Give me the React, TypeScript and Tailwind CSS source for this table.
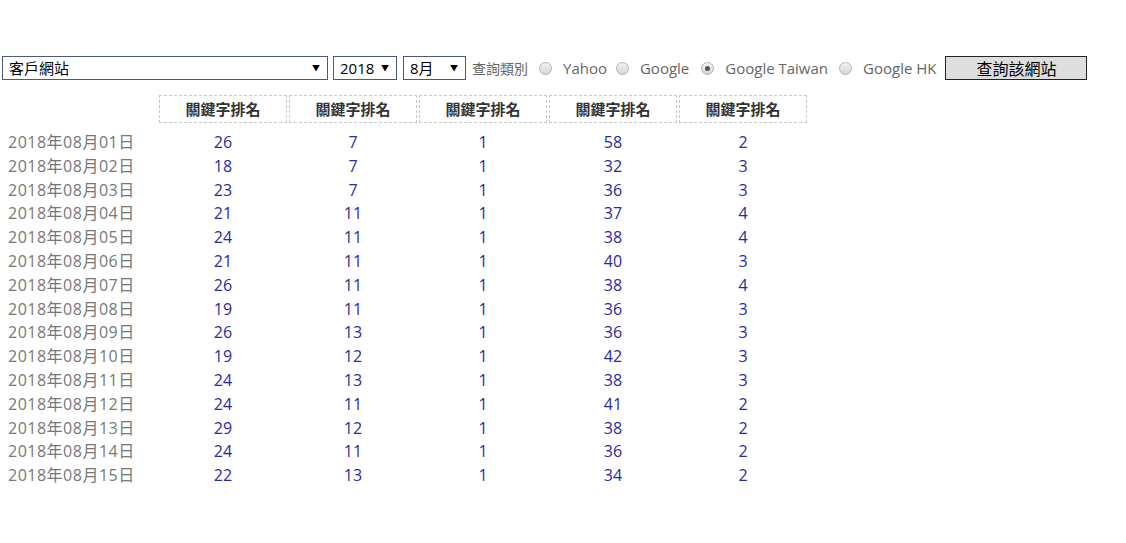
import React from 'react';

const rows: [string, number[]][] = [
  ['2018年08月01日', [26, 7, 1, 58, 2]],
  ['2018年08月02日', [18, 7, 1, 32, 3]],
  ['2018年08月03日', [23, 7, 1, 36, 3]],
  ['2018年08月04日', [21, 11, 1, 37, 4]],
  ['2018年08月05日', [24, 11, 1, 38, 4]],
  ['2018年08月06日', [21, 11, 1, 40, 3]],
  ['2018年08月07日', [26, 11, 1, 38, 4]],
  ['2018年08月08日', [19, 11, 1, 36, 3]],
  ['2018年08月09日', [26, 13, 1, 36, 3]],
  ['2018年08月10日', [19, 12, 1, 42, 3]],
  ['2018年08月11日', [24, 13, 1, 38, 3]],
  ['2018年08月12日', [24, 11, 1, 41, 2]],
  ['2018年08月13日', [29, 12, 1, 38, 2]],
  ['2018年08月14日', [24, 11, 1, 36, 2]],
  ['2018年08月15日', [22, 13, 1, 34, 2]]
];

// ml tweaks keep the radios where the screenshot has them
const engines = [
  { label: 'Yahoo', checked: false, ml: 'ml-[11px]' },
  { label: 'Google', checked: false, ml: 'ml-[9px]' },
  { label: 'Google Taiwan', checked: true, ml: 'ml-[12px]' },
  { label: 'Google HK', checked: false, ml: 'ml-[11px]' }
];

const FakeSelect = ({ text, width }: { text: string; width: string }) => (
  <div
    className={`${width} h-[24px] flex items-center justify-between border border-[#4a5a78] bg-white pl-[6px] pr-[7px] text-[15px] text-black`}>
    <span>{text}</span>
    <span className="text-[8px]">▼</span>
  </div>
);

const Radio = ({ checked }: { checked: boolean }) => (
  <span className="w-[13px] h-[13px] rounded-full border border-[#b5b5b5] bg-gradient-to-b from-[#f2f2f2] to-[#d6d6d6] flex items-center justify-center">
    {checked && <span className="w-[5px] h-[5px] rounded-full bg-[#555]" />}
  </span>
);

export default function App() {
  return (
    <div
      className="w-[1126px] h-[543px] bg-white overflow-hidden"
      style={{ fontFamily: '"Open Sans", "Noto Sans CJK TC", sans-serif' }}>
      <div className="flex items-center pt-[56px] pl-[2px] h-[80px]">
        <FakeSelect text="客戶網站" width="w-[326px]" />
        <div className="ml-[5px]">
          <FakeSelect text="2018" width="w-[64px]" />
        </div>
        <div className="ml-[6px]">
          <FakeSelect text="8月" width="w-[63px]" />
        </div>
        <span className="ml-[6px] text-[14px] text-[#666]">查詢類別</span>
        {engines.map((e) => (
          <div key={e.label} className={`flex items-center gap-[11px] ${e.ml}`}>
            <Radio checked={e.checked} />
            <span className="text-[15px] text-[#666]">{e.label}</span>
          </div>
        ))}
        <button className="ml-[9px] w-[142px] h-[24px] border border-[#222] bg-[#dedede] text-[16px] text-black">
          查詢該網站
        </button>
      </div>

      <div className="mt-[15px] grid grid-cols-[158px_repeat(5,130px)]">
        <div />
        {[0, 1, 2, 3, 4].map((i) => (
          <div key={i} className="h-[28px] ml-[1px] w-[128px] border border-dashed border-[#c8c8c8] flex items-center justify-center text-[15px] font-semibold text-[#333]">
            關鍵字排名
          </div>
        ))}
      </div>

      <div className="mt-[7px]">
        {rows.map(([date, vals]) => (
          <div key={date} className="grid grid-cols-[158px_repeat(5,130px)] h-[23.8px] items-center">
            <span className="pl-[8px] text-[16px] tracking-[0.5px] text-[#777]">{date}</span>
            {vals.map((v, i) => (
              <span key={i} className="text-center text-[16px] text-[#2a2aa0]">
                {v}
              </span>
            ))}
          </div>
        ))}
      </div>
    </div>
  );
}
